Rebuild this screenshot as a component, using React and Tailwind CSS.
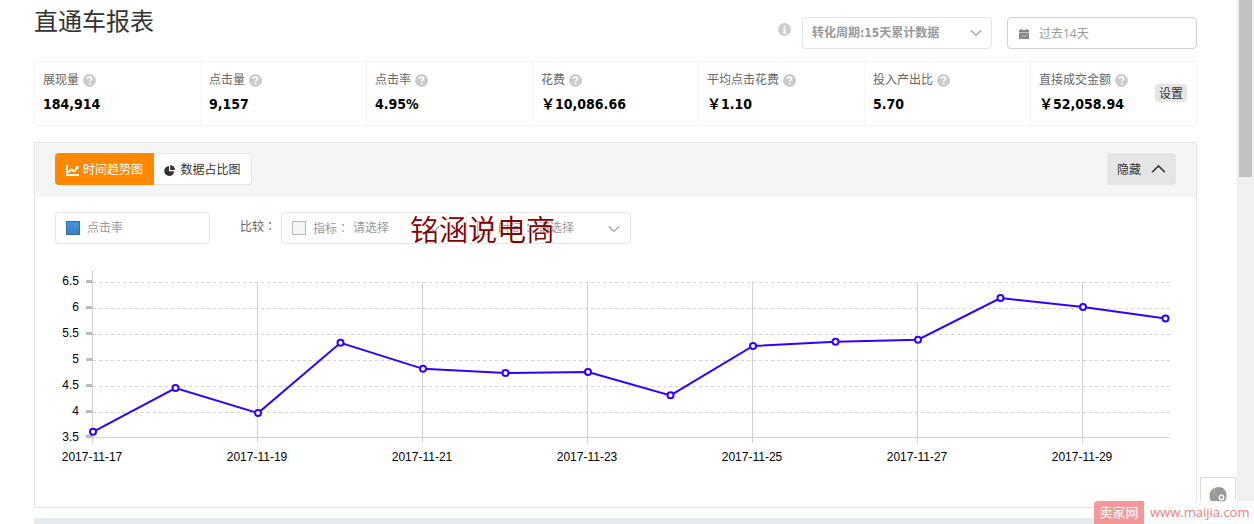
import React, { useState } from 'react';

const METRICS = [
  { label: '展现量', value: '184,914' },
  { label: '点击量', value: '9,157' },
  { label: '点击率', value: '4.95%' },
  { label: '花费', value: '￥10,086.66' },
  { label: '平均点击花费', value: '￥1.10' },
  { label: '投入产出比', value: '5.70' },
  { label: '直接成交金额', value: '￥52,058.94' },
];

const CLICK_RATE = [3.62, 4.46, 3.98, 5.33, 4.83, 4.75, 4.77, 4.32, 5.27, 5.35, 5.39, 6.19, 6.02, 5.8];
const Y_TICKS = [6.5, 6, 5.5, 5, 4.5, 4, 3.5];

function Chevron({ up, className }) {
  return (
    <svg viewBox="0 0 14 8" className={className} fill="none" stroke="currentColor" aria-hidden="true">
      <path d={up ? 'M1 7.5 7 1.5l6 6' : 'M1 1 7 7 13 1'} />
    </svg>
  );
}

function HelpIcon() {
  return (
    <svg viewBox="0 0 13 13" className="h-[13px] w-[13px] shrink-0" aria-hidden="true">
      <circle cx="6.5" cy="6.5" r="6.5" fill="#ccc" />
      <path d="M4.4 5c0-2.8 4.2-2.6 4.2-.2C8.6 6.2 6.6 6.3 6.6 7.8" fill="none" stroke="#fff" strokeWidth="1.5" />
      <path d="M5.8 9h1.6v1.5H5.8z" fill="#fff" />
    </svg>
  );
}

function Header() {
  return (
    <header className="flex justify-between">
      <h1 className="mt-[3px] text-2xl leading-9 text-[#333]">直通车报表</h1>
      <div className="mt-[17px] flex">
        <svg viewBox="0 0 13 13" className="mt-1.5 mr-[11px] h-[13px] w-[13px]" aria-hidden="true">
          <circle cx="6.5" cy="6.5" r="6.5" fill="#ccc" />
          <path d="M5.5 2.5h2v2h-2zM4.8 5.5h2.7v4h.8v1H4.8v-1h.8v-3h-.8z" fill="#fff" />
        </svg>
        <div className="relative mr-[15px] h-8 w-[190px]">
          <select
            aria-label="转化周期"
            className="h-full w-full appearance-none rounded border border-[#e5e5e5] bg-white pl-[9px] font-['DejaVu_Sans_Condensed','Noto_Sans_CJK_SC',sans-serif] text-xs font-bold text-[#999]"
          >
            <option>转化周期:15天累计数据</option>
          </select>
          <Chevron className="pointer-events-none absolute top-3 right-[10px] h-2 w-3 stroke-[1.3] text-[#8a96a3]" />
        </div>
        <button className="flex h-8 w-[190px] items-center rounded border border-[#d0d0d0] bg-white pt-px pl-[11px] text-xs text-[#999]">
          <svg viewBox="0 0 10 10" className="mr-[10px] h-[10px] w-[10px]" aria-hidden="true">
            <path d="M0 1h1.500V0h1.500v1h4V0h1.500v1H10v2H0zM0 3.600h10V10H0z" fill="#888" />
            <path d="M2.500 8 4.500 6.500l1 1L7.500 6" stroke="#ddd" strokeWidth=".7" fill="none" />
          </svg>
          过去14天
        </button>
      </div>
    </header>
  );
}

function Metrics() {
  return (
    <section className="relative mt-3 grid grid-cols-7 border-y border-l border-[#f5f5f5]">
      {METRICS.map((m) => (
        <div key={m.label} className="h-[63px] border-r border-[#f5f5f5] pt-2 pl-2">
          <div className="flex items-center gap-1 text-xs leading-5 text-[#666]">
            {m.label}
            <HelpIcon />
          </div>
          <div className="mt-1 font-['DejaVu_Sans_Condensed','Noto_Sans_CJK_SC',sans-serif] text-sm leading-5 font-bold text-black">
            {m.value}
          </div>
        </div>
      ))}
      <button className="absolute top-[22px] right-[10px] h-[18px] rounded bg-[#e5e5e5] px-1 pt-px text-xs leading-[18px] text-[#333]">
        设置
      </button>
    </section>
  );
}

function PanelHeader({ tab, onTab }) {
  return (
    <div className="flex h-[54px] items-start justify-between bg-[#f5f5f5] pt-[10px] pr-5 pl-5">
      <div className="flex text-xs">
        <button
          onClick={() => onTab('trend')}
          aria-pressed={tab === 'trend'}
          className="flex h-8 w-[99px] items-center justify-center gap-1 rounded-l bg-[#ff8800] pt-0.5 text-white"
        >
          <svg viewBox="0 0 13 11" className="h-[11px] w-[13px]" fill="none" stroke="currentColor" aria-hidden="true">
            <path d="M1 0v10h12" strokeWidth="1.8" />
            <path d="m2.5 7.5 3-3.500 2.500 2.500L12 2" strokeWidth="1.8" />
            <path d="M9 1h3.500v3.500z" fill="currentColor" stroke="none" />
          </svg>
          时间趋势图
        </button>
        <button
          onClick={() => onTab('share')}
          aria-pressed={tab === 'share'}
          className="flex h-8 w-[98px] items-center justify-center gap-[5px] rounded-r border border-l-0 border-[#e5e5e5] bg-white pt-0.5 text-[#333]"
        >
          <svg viewBox="0 0 11 11" className="h-[11px] w-[11px]" fill="currentColor" aria-hidden="true">
            <path d="M5 1v5.200h5.200A5 5 0 1 1 5 1z" />
            <path d="M6.200 0a5 5 0 0 1 4.800 5H6.200z" />
          </svg>
          数据占比图
        </button>
      </div>
      <button className="flex h-8 items-center gap-[10px] rounded bg-[#e5e5e5] px-[10px] pt-0.5 text-xs text-[#333]">
        隐藏
        <Chevron up className="mb-1 h-[9px] w-[15px] stroke-[1.5]" />
      </button>
    </div>
  );
}

function Colon() {
  return <span className="font-['Noto_Sans_CJK_TC',sans-serif]" lang="zh-TW">：</span>;
}

function CompareField({ id, label, className }) {
  return (
    <div className={`relative flex h-8 items-center rounded border border-[#e5e5e5] pl-[10px] text-xs text-[#999] ${className}`}>
      <input
        id={id}
        type="checkbox"
        className="mr-[7px] h-[14px] w-[14px] shrink-0 appearance-none border border-[#bbb] bg-[#f5f5f5]"
      />
      <label htmlFor={id} className="w-10 shrink-0">
        {label}
        <Colon />
      </label>
      <select aria-label={label} className="h-full min-w-0 flex-1 appearance-none bg-transparent">
        <option>请选择</option>
      </select>
      <Chevron className="pointer-events-none absolute top-3 right-[10px] h-2 w-3 stroke-[1.3] text-[#8a96a3]" />
    </div>
  );
}

function Filters() {
  return (
    <div className="relative flex px-5 pt-[15px]">
      <div className="relative h-8 w-[155px]">
        <select
          aria-label="指标"
          className="h-full w-full appearance-none rounded border border-[#e5e5e5] bg-white pl-[31px] text-xs text-[#999]"
        >
          <option>点击率</option>
        </select>
        <span className="pointer-events-none absolute top-[9px] left-[11px] h-[14px] w-[14px] border border-[#2d6fad] bg-linear-to-b from-[#4a94d6] to-[#3a7fc0]" />
      </div>
      <span className="ml-[30px] w-[41px] pt-1 text-xs leading-5 text-[#666]">
        比较
        <Colon />
      </span>
      <CompareField id="compare-metric" label="指标" className="w-[170px]" />
      <CompareField id="compare-time" label="时间" className="ml-[15px] w-[165px]" />
      <span className="pointer-events-none absolute top-[13px] left-[375px] text-[29px] leading-10 font-[350] whitespace-nowrap text-[#800000]">
        铭涵说电商
      </span>
    </div>
  );
}

function TrendChart() {
  const px = (i) => 58 + i * 82.5;
  const py = (v) => 22 + (6.5 - v) * 52;
  const points = CLICK_RATE.map((v, i) => [px(i), py(v)]);

  return (
    <svg
      viewBox="0 0 1161 247"
      className="mt-4 block w-full font-['Liberation_Sans',Arial,sans-serif] text-xs"
      role="img"
      aria-label="点击率"
    >
      {Y_TICKS.map((v, i) => {
        const y = Math.min(22.5 + i * 26, 177.5);
        const last = i === Y_TICKS.length - 1;
        return (
          <g key={v}>
            <path d={`M58 ${y}H1135`} stroke="#d3d3d3" strokeDasharray={last ? undefined : '3 3'} />
            <path d={`M51 ${y - 1}h6`} stroke="#bbb" strokeWidth="3" />
            <text x="44" y={25 + i * 26} textAnchor="end">{v}</text>
          </g>
        );
      })}
      {/* one vertical line and date for every second day */}
      {[17, 19, 21, 23, 25, 27, 29].map((day, i) => (
        <g key={day}>
          <path d={`M${57.5 + i * 165} ${i === 0 ? 10 : 22}V183`} stroke="#d0d0d0" />
          <text x={57 + i * 165} y="201" textAnchor="middle">2017-11-{day}</text>
        </g>
      ))}
      <polyline points={points.map((p) => p.join(',')).join(' ')} fill="none" stroke="#3300ff" strokeWidth="2" />
      {points.map(([x, y]) => (
        <circle key={x} cx={x} cy={y} r="3" fill="#fff" stroke="#3300ff" strokeWidth="2" />
      ))}
    </svg>
  );
}

export default function App() {
  const [tab, setTab] = useState('trend');

  return (
    <div className="relative flex min-h-screen bg-white font-['Open_Sans','Noto_Sans_CJK_SC',sans-serif]">
      <main className="min-w-0 flex-1 pr-10 pl-[34px]">
        <Header />
        <Metrics />
        <section className="mt-4 border border-[#e5e5e5]">
          <PanelHeader tab={tab} onTab={setTab} />
          <Filters />
          <TrendChart />
        </section>
        <div className="mt-[10px] h-1.5 bg-[#e3ecf0]" />
      </main>
      <div className="w-[17px] shrink-0 bg-[#f0f0f0] pr-[2px] pl-[2px]">
        <div className="h-[177px] bg-[#c1c1c1]" />
      </div>

      <button aria-label="客服" className="absolute right-[18px] bottom-0 flex h-[47px] w-9 justify-center border border-[#ddd] bg-white pt-2">
        <svg viewBox="0 0 18 18" className="h-[18px] w-[18px]" aria-hidden="true">
          <path d="M1 13C-1 6 4 1 9.500 1S18 5 17.500 11c-.3 4-3 5.500-5.500 5.500-2 0-2.500-1.500-4-1.500S2 17 1 13z" fill="#999" />
          <path d="M6 2.500c-1.500 2.500-.5 5.500 2 6.500" stroke="#c9b8a8" fill="none" />
          <circle cx="12.500" cy="11.500" r="2.200" fill="#999" stroke="#fff" strokeWidth="1.500" />
        </svg>
      </button>
      <div className="pointer-events-none absolute right-0 bottom-0 flex h-[23px] w-40 text-[13px] leading-[23px]">
        <span className="w-[50px] rounded-tl bg-[#f28e8e]/90 text-center text-white">卖家网</span>
        <span className="flex-1 bg-white/70 pl-[6px] text-[#f08080]">www.maijia.com</span>
      </div>
    </div>
  );
}
